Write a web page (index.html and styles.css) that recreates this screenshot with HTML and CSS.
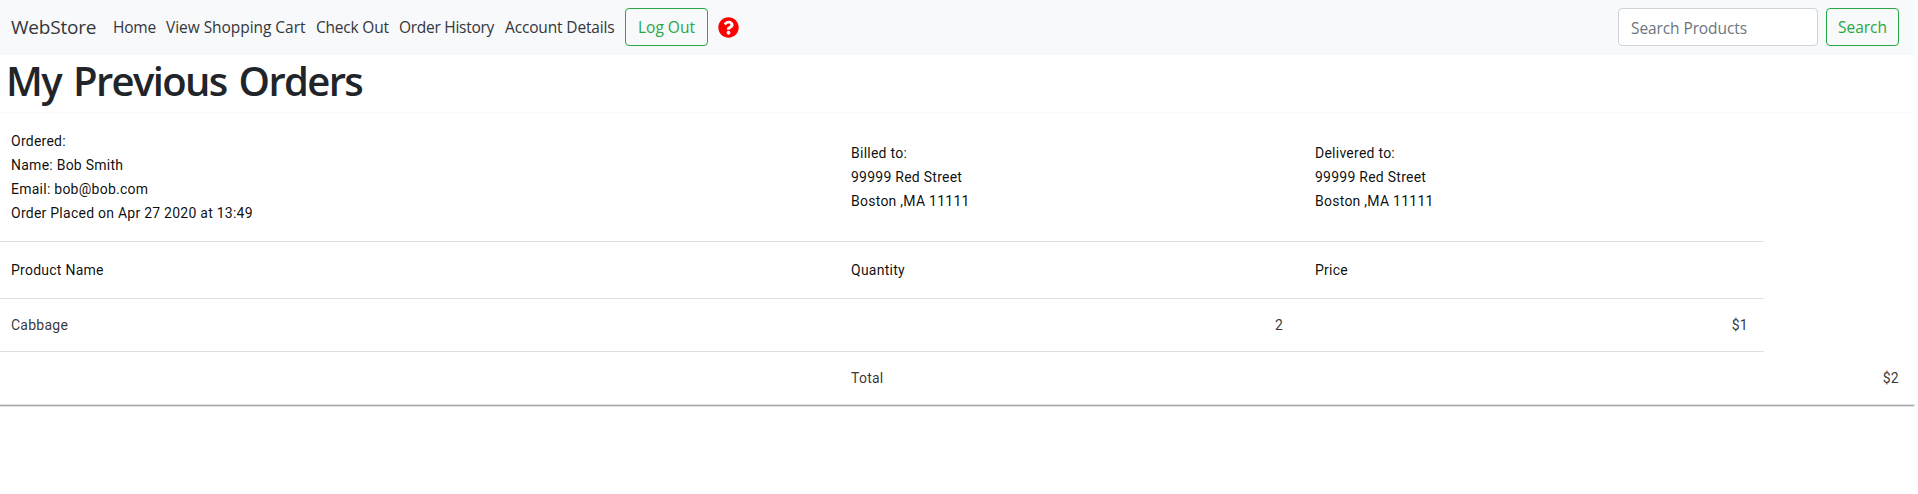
FILE: index.html
```html
<!DOCTYPE html>
<html lang="en">
<head>
<meta charset="utf-8">
<title>WebStore</title>
<link rel="stylesheet" href="styles.css">
</head>
<body>
<div class="page">
  <nav class="navbar">
    <a class="brand">WebStore</a>
    <ul class="links">
      <li class="home">Home</li>
      <li class="cart">View Shopping Cart</li>
      <li class="checkout">Check Out</li>
      <li class="history">Order History</li>
      <li class="account">Account Details</li>
    </ul>
    <button class="btn logout">Log Out</button>
    <svg class="help" viewBox="0 0 512 512"><path fill="red" d="M504 256c0 137-111 248-248 248S8 393 8 256C8 119 119 8 256 8s248 111 248 248zM262.700 90c-54.500 0-89.300 23-116.500 63.800-3.500 5.300-2.400 12.400 2.700 16.300l34.700 26.300c5.200 3.900 12.600 3 16.700-2.100 17.900-22.700 30.100-35.800 57.300-35.800 20.400 0 45.700 13.100 45.700 33 0 15-12.400 22.700-32.500 34C247.100 238.500 216 254.900 216 296v4c0 6.600 5.400 12 12 12h56c6.600 0 12-5.400 12-12v-1.300c0-28.500 83.200-29.600 83.200-106.700C379.200 134 319 90 262.700 90zM256 338c-25.400 0-46 20.600-46 46s20.600 46 46 46 46-20.600 46-46-20.600-46-46-46z"/></svg>
    <form class="search">
      <input class="field" type="text" placeholder="Search Products">
      <button class="btn go" type="button">Search</button>
    </form>
  </nav>
  <h1 class="title"><span>My Previous Orders</span></h1>
  <div class="card">
    <table class="orders">
      <colgroup><col class="c1"><col class="c2"><col class="c3"><col class="c4"></colgroup>
      <tr class="details">
        <th><span>Ordered:<br>Name: Bob Smith<br>Email: bob@bob.com<br>Order Placed on Apr 27 2020 at 13:49</span></th>
        <th>Billed to:<br>99999 Red Street<br>Boston ,MA 11111</th>
        <th>Delivered to:<br>99999 Red Street<br>Boston ,MA 11111</th>
      </tr>
      <tr class="heads"><th>Product Name</th><th>Quantity</th><th>Price</th></tr>
      <tr class="item"><td>Cabbage</td><td class="num">2</td><td class="num">$1</td></tr>
      <tr class="total"><td></td><td>Total</td><td></td><td class="num sum">$2</td></tr>
    </table>
  </div>
  <div class="edge"></div>
</div>
</body>
</html>
```

FILE: styles.css
```css
* { box-sizing: border-box; }
body {
  margin: 0;
  background: #fff;
  color: #212529;
  font: 16px/24px "Open Sans", sans-serif;
}
.page { width: 1915px; }
.navbar {
  display: flex;
  align-items: center;
  height: 55px;
  padding: 0 16px 1px 11px;
  background: #f8f9fa;
}
.brand { width: 102px; font-size: 19px; color: #33363a; letter-spacing: -0.2px; white-space: nowrap; }
.links { display: flex; margin: 0; padding: 0; list-style: none; white-space: nowrap; font-size: 15.5px; letter-spacing: -0.2px; color: #33363a; }
.home { width: 53px; }
.cart { width: 150px; letter-spacing: -0.05px; }
.checkout { width: 83px; }
.history { width: 106px; letter-spacing: -0.27px; }
.account { width: 120px; letter-spacing: -0.15px; }
.btn {
  height: 38px;
  padding: 0;
  border: 1px solid #28a745;
  border-radius: 4px;
  background: transparent;
  color: #28a745;
  font: 15.5px/24px "Open Sans", sans-serif;
  letter-spacing: 0;
}
.logout { width: 83px; }
.help { width: 21px; height: 21px; margin-left: 10px; }
.search { display: flex; gap: 8px; margin-left: auto; }
.field {
  width: 200px;
  height: 38px;
  padding: 7px 12px 5px;
  border: 1px solid #ced4da;
  border-radius: 4px;
  font: 15.5px/24px "Open Sans", sans-serif;
  letter-spacing: -0.1px;
}
.field::placeholder { color: #6c757d; opacity: 1; }
.go { width: 73px; }
.title { height: 57px; margin: 0; padding: 0 0 0 6px; font-size: 40px; line-height: 51px; font-weight: 600; letter-spacing: -1.65px; word-spacing: 3.3px; }
.card {
  height: 292px;
  border-top: 1px solid #fafafa;
  border-radius: 0 4px 0 0;
}
/* Raised lower edge of the card */
.edge {
  height: 3px;
  border-top: 1px solid #e0e0e0;
  border-bottom: 1px solid #e0e0e0;
  border-radius: 0 0 3px 0;
  background: #aaa;
}
.orders { width: 1915px; table-layout: fixed; border-collapse: separate; border-spacing: 0; font: 14px/24px Roboto, sans-serif; }
.c1 { width: 835px; }
.c2 { width: 464px; }
.c3 { width: 465px; }
.c4 { width: 151px; }
th, td { padding: 0 16px; text-align: left; vertical-align: middle; color: rgba(0,0,0,.8); letter-spacing: .25px; }
th:first-child, td:first-child { padding-left: 11px; }
th { font-weight: 400; letter-spacing: .25px; color: rgba(0,0,0,.95); }
.details th, .heads th, .item td { border-bottom: 1px solid #e0e0e0; }
.details { height: 129px; }
.heads { height: 57px; }
.item { height: 53px; }
.total { height: 52px; }
.num { text-align: right; }
```
